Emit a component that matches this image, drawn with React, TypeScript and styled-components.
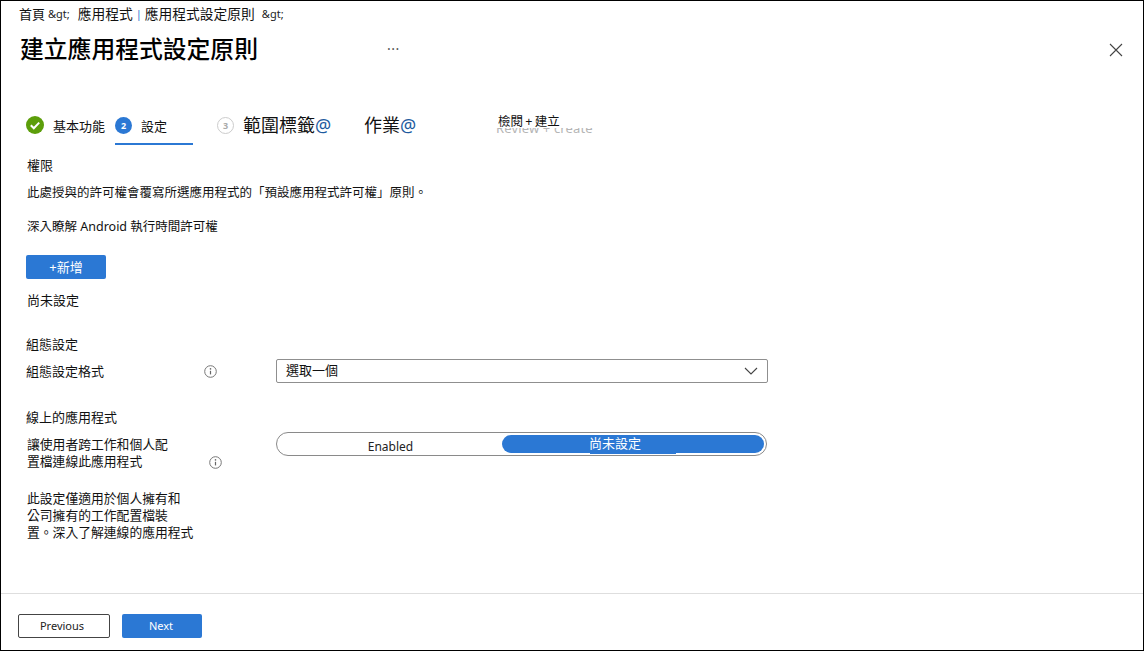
import React from "react";
import styled, { createGlobalStyle } from "styled-components";

const Global = createGlobalStyle`
  html, body { margin: 0; padding: 0; background: #fff; }
  body { font-family: "Noto Sans", "Noto Sans CJK TC", sans-serif; font-size: 13px; color: #111; }
  * { box-sizing: border-box; }
`;

const Frame = styled.div`
  width: 1144px; height: 651px; border: 1px solid #000; display: flex; flex-direction: column; overflow: hidden;
`;
const Crumbs = styled.nav`
  display: flex; height: 26px; padding: 3px 0 0 18px; font-size: 13.75px; line-height: 20px; white-space: pre;
`;
const Home = styled.span`font-size: 13px;`;
const Entity = styled.span<{ $ml: number }>`font-size: 11px; margin-left: ${(p) => p.$ml}px; color: #222;`;
const CrumbText = styled.span`margin-left: 8px;`;
const Pipe = styled.span`color: #2b78d4; font-size: 11px; margin: 0 3px 0 3px;`;
const TitleRow = styled.header`
  display: flex; align-items: center; height: 46px; padding: 0 19px;
`;
const Title = styled.h1`
  margin: -3px 0 0; width: 367px; font-size: 23.8px; line-height: 46px; font-weight: 500; color: #000;
`;
const More = styled.span`font-size: 14px; color: #555; margin-top: -4px; letter-spacing: 0.5px;`;
const Close = styled.button`
  margin-left: auto; width: 14px; height: 14px; padding: 0; border: 0; background: none; display: flex; margin-right: 1px; margin-top: -1px;
`;
const Steps = styled.div`
  display: flex; height: 39px; margin-top: 33px; padding-left: 25px; align-items: flex-start;
`;
const Step = styled.div<{ $w: number; $active?: boolean; $pl?: number }>`
  width: ${(p) => p.$w}px; height: 39px; display: flex; align-items: center; padding: 1px 0 0 ${(p) => p.$pl ?? 0}px; gap: 9px;
  border-bottom: 2px solid ${(p) => (p.$active ? "#2b78d4" : "transparent")};
  font-size: 13px; white-space: pre; flex: none;
`;
const Circle = styled.span<{ $active?: boolean }>`
  width: 17px; height: 17px; border-radius: 50%; display: flex; align-items: center; justify-content: center; flex: none;
  font-size: 9px; font-weight: 700; font-family: "Noto Sans", sans-serif;
  background: ${(p) => (p.$active ? "#2b78d4" : "#fff")};
  color: ${(p) => (p.$active ? "#fff" : "#aaa")};
  border: ${(p) => (p.$active ? "0" : "1.5px solid #ccc")};
`;
const CheckIcon = styled.svg`flex: none;`;
const BigLabel = styled.span`font-size: 18px; line-height: 24px; margin-top: 0; color: #111;`;
const At = styled.span`color: #1c5a9e;`;
const ReviewStep = styled.div`
  position: relative; width: 100px; height: 30px; margin-left: 25px; padding-top: 8px; font-size: 12.5px; line-height: 16px; white-space: pre; flex: none;
`;
const Plus = styled.span`margin: 0 -1px;`;
const Ghost = styled.span`
  position: absolute; left: -2px; top: 22px; height: 6px; overflow: hidden; color: #b5b5b5; font-size: 13px; line-height: 0;
  font-family: "Noto Sans", sans-serif; letter-spacing: 0.15px;
`;
const Body = styled.main`
  display: flex; flex-direction: column; padding-left: 26px; font-size: 13px;
`;
const Line = styled.div<{ $h: number; $mt?: number; $ml?: number; $small?: boolean }>`
  height: ${(p) => p.$h}px; line-height: ${(p) => p.$h}px; margin-top: ${(p) => p.$mt ?? 0}px; margin-left: ${(p) => p.$ml ?? 0}px; white-space: pre;
  font-size: ${(p) => (p.$small ? "12.5px" : "13px")};
`;
const AddButton = styled.button`
  width: 80px; height: 24px; margin: 19px 0 0 -1px; border: 0; border-radius: 2px; background: #2b78d4; color: #fff;
  font: inherit; font-size: 13px; line-height: 22px; padding: 0;
`;
const FormatRow = styled.div`
  display: flex; align-items: center; height: 24px; margin: 6px 0 0 -1px;
`;
const Label = styled.div`width: 178px; line-height: 18px;`;
const Info = styled.svg`width: 13px; height: 13px; flex: none;`;
const Select = styled.div`
  width: 492px; height: 24px; margin-left: 59px; border: 1px solid #8f8f8f; border-radius: 2px; display: flex; align-items: center;
  justify-content: space-between; padding: 0 9px 2px 9px; font-size: 13px; line-height: 20px;
`;
const Chevron = styled.svg`margin-top: 2px;`;
const ToggleRow = styled.div`
  display: flex; align-items: flex-start; margin: 6px 0 0 0; height: 42px;
`;
const ToggleLabel = styled.div`width: 182px; line-height: 17px; padding-top: 4px; white-space: pre; height: 42px; font-size: 12.8px;`;
const ToggleInfo = styled.span`margin-top: 24px; display: flex; flex: none;`;
const Toggle = styled.div`
  width: 491px; height: 24px; margin-left: 54px; border: 1px solid #8a8a8a; border-radius: 12px; display: flex; padding: 2px;
`;
const ToggleOption = styled.div<{ $on?: boolean }>`
  flex: ${(p) => (p.$on ? "0 0 262px" : "1")}; height: 18px; border-radius: 9px; text-align: center; position: relative;
  padding-right: ${(p) => (p.$on ? "36px" : "0")};
  background: ${(p) => (p.$on ? "#2b78d4" : "transparent")}; color: ${(p) => (p.$on ? "#fff" : "#222")};
  font-size: ${(p) => (p.$on ? "13px" : "12px")}; line-height: ${(p) => (p.$on ? "16px" : "24px")};
`;
const Tail = styled.span`
  position: absolute; left: 88px; top: 18px; width: 86px; height: 1px; background: #2b78d4;
`;
const Note = styled.div`margin-top: 16px; line-height: 17px; white-space: pre; font-size: 12.8px;`;
const Footer = styled.footer`
  margin-top: auto; height: 57px; border-top: 1px solid #dedede; display: flex; gap: 12px; padding: 20px 0 0 17px;
`;
const FootBtn = styled.button<{ $primary?: boolean }>`
  height: 24px; width: ${(p) => (p.$primary ? 80 : 92)}px; padding: 0 ${(p) => (p.$primary ? 2 : 4)}px 0 0; border-radius: 2px; font: inherit; font-size: 11px;
  font-family: "Noto Sans", sans-serif; line-height: 22px;
  background: ${(p) => (p.$primary ? "#2b78d4" : "#fff")}; color: ${(p) => (p.$primary ? "#fff" : "#222")};
  border: ${(p) => (p.$primary ? "0" : "1px solid #444")};
`;

const InfoIcon = () => (
  <Info viewBox="0 0 13 13" fill="none">
    <circle cx="6.5" cy="6.5" r="5.8" stroke="#777" />
    <path d="M6.5 5.8v3.6" stroke="#666" strokeWidth="1.2" />
    <circle cx="6.5" cy="3.9" r="0.8" fill="#666" />
  </Info>
);

export default function App() {
  return (
    <Frame>
      <Global />
      <Crumbs>
        <Home>首頁</Home>
        <Entity $ml={3}>&amp;gt;</Entity>
        <CrumbText>應用程式</CrumbText>
        <Pipe>|</Pipe>
        應用程式設定原則
        <Entity $ml={7}>&amp;gt;</Entity>
      </Crumbs>
      <TitleRow>
        <Title>建立應用程式設定原則</Title>
        <More>···</More>
        <Close aria-label="關閉">
          <svg width="14" height="14" viewBox="0 0 14 14" fill="none">
            <path d="M1 1l12 12M13 1L1 13" stroke="#444" strokeWidth="1.1" />
          </svg>
        </Close>
      </TitleRow>
      <Steps>
        <Step $w={89}>
          <CheckIcon width="18" height="18" viewBox="0 0 18 18">
            <circle cx="9" cy="9" r="9" fill="#5c9e0a" />
            <path d="M4.8 9.2l3 3 5.4-5.6" fill="none" stroke="#fff" strokeWidth="2" />
          </CheckIcon>
          基本功能
        </Step>
        <Step $w={78} $active>
          <Circle $active>2</Circle>
          設定
        </Step>
        <Step $w={147} $pl={24}>
          <Circle>3</Circle>
          <BigLabel>範圍標籤<At>@</At></BigLabel>
        </Step>
        <Step $w={133} $pl={24}>
          <BigLabel>作業<At>@</At></BigLabel>
        </Step>
        <ReviewStep>
          檢閱<Plus> + </Plus>建立
          <Ghost>Review + create</Ghost>
        </ReviewStep>
      </Steps>
      <Body>
        <Line $h={18} $mt={11}>權限</Line>
        <Line $h={18} $mt={10} $small>此處授與的許可權會覆寫所選應用程式的「預設應用程式許可權」原則。</Line>
        <Line $h={18} $mt={16} $small>深入瞭解 Android 執行時間許可權</Line>
        <AddButton>+新增</AddButton>
        <Line $h={18} $mt={12}>尚未設定</Line>
        <Line $h={18} $mt={26} $ml={-1}>組態設定</Line>
        <FormatRow>
          <Label>組態設定格式</Label>
          <InfoIcon />
          <Select>
            選取一個
            <Chevron width="14" height="8" viewBox="0 0 14 8" fill="none">
              <path d="M1 1l6 6 6-6" stroke="#444" strokeWidth="1.1" />
            </Chevron>
          </Select>
        </FormatRow>
        <Line $h={18} $mt={25} $ml={-1}>線上的應用程式</Line>
        <ToggleRow>
          <ToggleLabel>{"讓使用者跨工作和個人配\n置檔連線此應用程式"}</ToggleLabel>
          <ToggleInfo><InfoIcon /></ToggleInfo>
          <Toggle>
            <ToggleOption>Enabled</ToggleOption>
            <ToggleOption $on>尚未設定<Tail /></ToggleOption>
          </Toggle>
        </ToggleRow>
        <Note>{"此設定僅適用於個人擁有和\n公司擁有的工作配置檔裝\n置。深入了解連線的應用程式"}</Note>
      </Body>
      <Footer>
        <FootBtn>Previous</FootBtn>
        <FootBtn $primary>Next</FootBtn>
      </Footer>
    </Frame>
  );
}
